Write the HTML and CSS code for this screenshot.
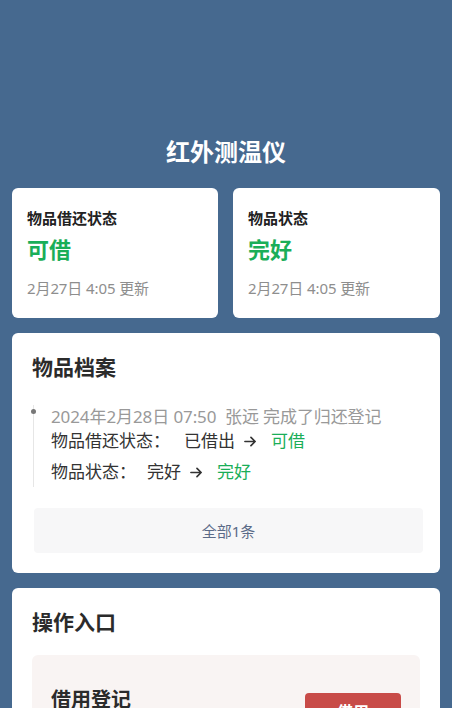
FILE: index.html
```html
<!DOCTYPE html>
<html lang="zh-CN">
<head>
<meta charset="utf-8">
<link rel="stylesheet" href="styles.css">
</head>
<body>
<div class="page">
  <h1 class="title">红外测温仪</h1>
  <div class="stats">
    <div class="card stat">
      <div class="stat-label">物品借还状态</div>
      <div class="stat-value">可借</div>
      <div class="stat-time">2月27日 4:05 更新</div>
    </div>
    <div class="card stat">
      <div class="stat-label">物品状态</div>
      <div class="stat-value">完好</div>
      <div class="stat-time">2月27日 4:05 更新</div>
    </div>
  </div>

  <div class="card section">
    <h2 class="section-title">物品档案</h2>
    <div class="timeline">
      <div class="tl-head">2024年2月28日 07:50&nbsp; 张远 完成了归还登记</div>
      <div class="tl-row"><span class="tl-key">物品借还状态：</span><span class="tl-old">已借出</span><svg class="arrow" viewBox="0 0 14 14" width="13" height="13"><path d="M1 7H12M7.5 2.5L12 7L7.5 11.5" fill="none" stroke="#333" stroke-width="1.8" stroke-linecap="round" stroke-linejoin="round"/></svg><span class="tl-new">可借</span></div>
      <div class="tl-row second"><span class="tl-key short">物品状态：</span><span class="tl-old">完好</span><svg class="arrow" viewBox="0 0 14 14" width="13" height="13"><path d="M1 7H12M7.5 2.5L12 7L7.5 11.5" fill="none" stroke="#333" stroke-width="1.8" stroke-linecap="round" stroke-linejoin="round"/></svg><span class="tl-new">完好</span></div>
    </div>
    <div class="all-btn">全部1条</div>
  </div>

  <div class="card section">
    <h2 class="section-title">操作入口</h2>
    <div class="action">
      <div class="action-name">借用登记</div>
      <div class="action-btn">借用</div>
    </div>
  </div>
</div>
</body>
</html>
```

FILE: styles.css
```css
* { box-sizing: border-box; }
html, body { margin: 0; padding: 0; }
body {
  background: #46698f;
  font-family: "Noto Sans", "Noto Sans CJK SC", sans-serif;
  color: #333;
}
.page {
  padding: 132px 12px 20px;
  display: flex;
  flex-direction: column;
  gap: 15px;
}
.title {
  margin: 0;
  text-align: center;
  color: #fff;
  font-size: 24px;
  font-weight: 700;
  line-height: 40px;
  height: 41px;
}
.stats {
  display: grid;
  grid-template-columns: 206px 207px;
  gap: 15px;
}
.card {
  background: #fff;
  border-radius: 6px;
}
.stat {
  padding: 19px 15px;
  height: 130px;
}
.stat-label {
  font-size: 15px;
  font-weight: 700;
  line-height: 22px;
  color: #222;
}
.stat-value {
  font-size: 22px;
  font-weight: 700;
  line-height: 30px;
  color: #1aae58;
  margin-top: 5px;
}
.stat-time {
  font-size: 15px;
  line-height: 22px;
  color: #8e8e8e;
  margin-top: 13px;
  letter-spacing: -0.1px;
}
.section {
  padding: 19px 20px 20px;
}
.section-title {
  margin: 0;
  font-size: 21px;
  font-weight: 700;
  line-height: 30px;
  color: #2b2b2b;
}
.timeline {
  position: relative;
  margin: 23px 0 0 1px;
  padding-left: 17px;
  padding-bottom: 3px;
  border-left: 1px solid #e6e6e6;
}
.timeline::before {
  content: "";
  position: absolute;
  left: -3px;
  top: 4px;
  width: 5px;
  height: 5px;
  border-radius: 50%;
  background: #777;
}
.tl-head {
  font-size: 17px;
  line-height: 24px;
  color: #999;
  letter-spacing: -0.1px;
}
.tl-row {
  display: flex;
  align-items: center;
  font-size: 17px;
  line-height: 24px;
  color: #333;
}
.tl-row.second { margin-top: 7px; }
.tl-key { margin-right: 14px; }
.tl-key.short { margin-right: 11px; }
.arrow {
  margin: 0 14px 0 9px;
  flex: none;
}
.tl-new { color: #1aae58; }
.all-btn {
  margin: 21px -3px 0 2px;
  height: 45px;
  border-radius: 4px;
  background: #f7f7f8;
  color: #5b6b88;
  font-size: 15px;
  display: flex;
  align-items: center;
  justify-content: center;
}
.action {
  margin-top: 18px;
  background: #f9f4f3;
  border-radius: 6px;
  padding: 30px 19px 30px;
  display: flex;
  align-items: flex-start;
  justify-content: space-between;
}
.action-name {
  font-size: 20px;
  font-weight: 700;
  color: #2b2b2b;
  line-height: 30px;
}
.action-btn {
  margin-top: 8px;
  width: 96px;
  height: 36px;
  border-radius: 4px;
  background: #c84b48;
  color: #fff;
  font-size: 16px;
  font-weight: 700;
  display: flex;
  align-items: center;
  justify-content: center;
}
```
